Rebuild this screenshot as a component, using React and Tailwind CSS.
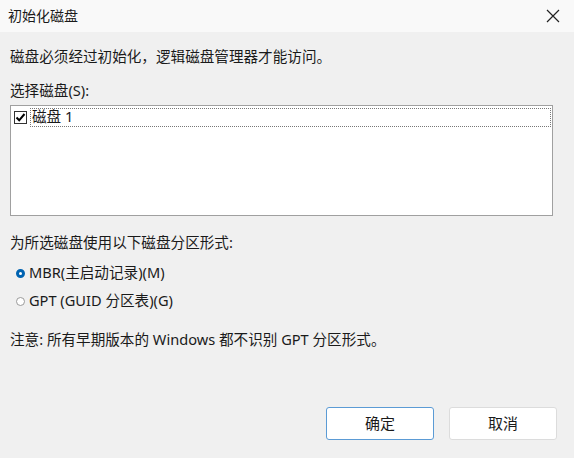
import React from "react";

export default function App() {
  const font = { fontFamily: '"Noto Sans", "Noto Sans CJK SC", sans-serif' };
  return (
    <div
      className="w-[574px] h-[458px] bg-[#f0f0f0] text-[#1a1a1a] flex flex-col overflow-hidden"
      style={font}
    >
      {/* title bar */}
      <div className="h-[32px] bg-[#f9f9f9] flex items-center justify-between pl-[8px] pr-[12px]">
        <span className="text-[14px] leading-none">初始化磁盘</span>
        <svg width="14" height="14" viewBox="0 0 14 14" className="mr-[2px]">
          <path d="M1 1 L13 13 M13 1 L1 13" stroke="#222" strokeWidth="1.2" />
        </svg>
      </div>

      <div className="flex flex-col px-[10px]">
        <div className="mt-[14px] text-[14.6px] leading-[20px]">
          磁盘必须经过初始化，逻辑磁盘管理器才能访问。
        </div>
        <div className="mt-[14px] text-[14.6px] leading-[20px]">选择磁盘(S):</div>

        {/* list box */}
        <div className="mt-[5px] w-[543px] h-[111px] border border-[#a0a0a0] bg-white p-[1px]">
          <div className="flex items-center h-[20px]">
            <div className="ml-[2px] mt-[1px] w-[13px] h-[13px] border border-[#333] bg-white flex items-center justify-center">
              <svg width="11" height="11" viewBox="0 0 11 11">
                <path d="M1.5 5.5 L4.2 8.3 L9.5 2" stroke="#000" strokeWidth="2" fill="none" />
              </svg>
            </div>
            <div className="ml-[3px] flex-1 h-[19px] border border-dotted border-[#777] flex items-center pl-[1px] text-[14.6px]">
              磁盘 1
            </div>
          </div>
        </div>

        <div className="mt-[16px] text-[14.6px] leading-[20px]">为所选磁盘使用以下磁盘分区形式:</div>

        <div className="mt-[11px] flex items-center h-[20px] text-[14.6px]">
          <span className="ml-[6px] w-[9px] h-[9px] rounded-full border-[3px] border-[#0063b1] bg-white"></span>
          <span className="ml-[4px]">MBR(主启动记录)(M)</span>
        </div>
        <div className="mt-[8px] flex items-center h-[20px] text-[14.6px]">
          <span className="ml-[6px] w-[9px] h-[9px] rounded-full border border-[#9a9a9a] bg-white"></span>
          <span className="ml-[4px]">GPT (GUID 分区表)(G)</span>
        </div>

        <div className="mt-[18px] text-[14.6px] leading-[20px]">
          注意: 所有早期版本的 Windows 都不识别 GPT 分区形式。
        </div>
      </div>

      <div className="mt-auto mb-[18px] flex justify-end gap-[15px] pr-[17px]">
        <button className="w-[108px] h-[33px] bg-white border border-[#5b9bd5] rounded-[3px] text-[15px]" style={font}>
          确定
        </button>
        <button className="w-[108px] h-[33px] bg-white border border-[#dcdcdc] rounded-[3px] text-[15px]" style={font}>
          取消
        </button>
      </div>
    </div>
  );
}
